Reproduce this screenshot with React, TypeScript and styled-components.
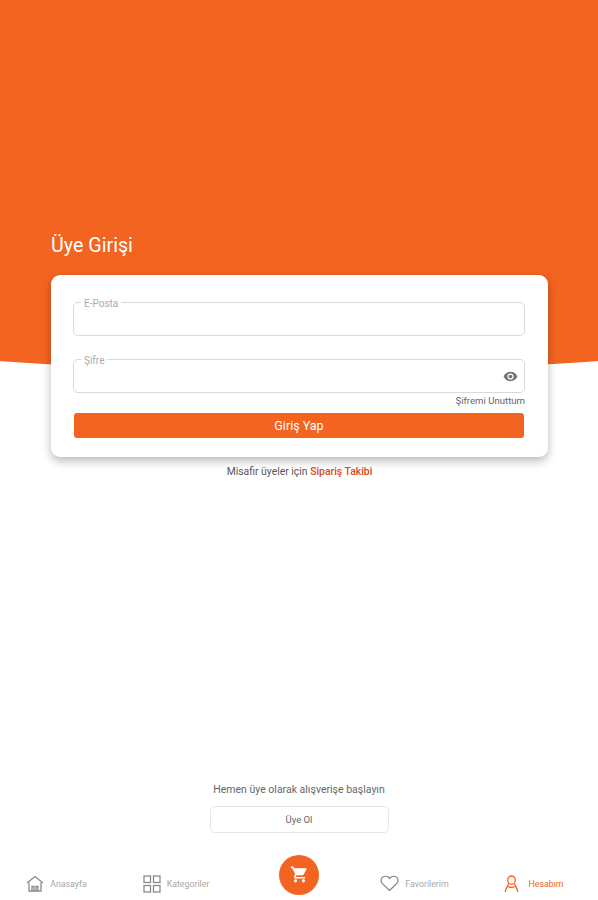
import * as React from 'react'
import styled, { createGlobalStyle } from 'styled-components';
import { MdShoppingCart, MdVisibility } from 'react-icons/md';

const ORANGE = '#f36421';

const GlobalStyle = createGlobalStyle`
    html, body {
        margin: 0;
        padding: 0;
        background: #fff;
        font-family: Roboto, "Liberation Sans", sans-serif;
    }
`
const Page = styled.div`
    position: relative;
    width: 598px;
    height: 900px;
    overflow: hidden;
    display: flex;
    flex-direction: column;
    background: #fff;
`
const HeroShape = styled.div`
    position: absolute;
    left: -121px;
    right: -121px;
    top: -700px;
    height: 1070px;
    border-radius: 0 0 50% 50% / 0 0 30px 30px;
    background: ${ORANGE};
`
const Main = styled.main`
    position: relative;
    flex: 1;
    display: flex;
    flex-direction: column;
    padding: 234px 50px 0 51px;
`
const Title = styled.h1`
    margin: 0 0 17px;
    font-size: 19.7px;
    line-height: 24px;
    font-weight: 400;
    color: #fff;
`
const Card = styled.form`
    display: flex;
    flex-direction: column;
    height: 182px;
    box-sizing: border-box;
    padding: 22px 23px 0 22px;
    border-radius: 9px;
    background: #fff;
    box-shadow: 0 4px 10px rgba(0, 0, 0, 0.28);
`
const Field = styled.fieldset`
    position: relative;
    height: 39px;
    box-sizing: border-box;
    margin: 0 0 18px;
    padding: 0 0 0 7px;
    border: 1.5px solid #d9d9d9;
    border-radius: 5px;
    &:last-of-type {
        margin-bottom: 0;
    }
`
const Legend = styled.legend`
    padding: 0 3px;
    font-size: 10px;
    line-height: 11px;
    color: #ababab;
    transform: translateY(1px);
`
const EyeIcon = styled(MdVisibility)`
    position: absolute;
    right: 6px;
    top: 4px;
    width: 15px;
    height: 15px;
    color: #757575;
`
const ForgotLink = styled.a`
    align-self: flex-end;
    margin-top: 2px;
    font-size: 9.6px;
    line-height: 12px;
    color: #666;
`
const SubmitButton = styled.button`
    height: 25px;
    margin: 6px 1px 0 1px;
    border: 0;
    border-radius: 3px;
    background: ${ORANGE};
    color: #fff;
    font-family: inherit;
    font-size: 12.5px;
`
const GuestLine = styled.p`
    margin: 9px 0 0;
    text-align: center;
    font-size: 10.4px;
    line-height: 12px;
    color: #555;
`
const GuestLink = styled.a`
    font-weight: 500;
    color: #d8481a;
`
const SignUp = styled.section`
    display: flex;
    flex-direction: column;
    align-items: center;
    gap: 10px;
    padding-bottom: 18px;
`
const SignUpText = styled.p`
    margin: 0;
    font-size: 10.5px;
    line-height: 13px;
    color: #666;
`
const SignUpButton = styled.button`
    width: 179px;
    height: 27px;
    box-sizing: border-box;
    background: #fff;
    border: 1px solid #e6e6e6;
    border-radius: 5px;
    font-family: inherit;
    font-size: 9.5px;
    color: #666;
`
const Nav = styled.nav`
    position: relative;
    display: grid;
    grid-template-columns: 113px 126px 120px 111px 128px;
    align-items: center;
    height: 49px;
    box-sizing: border-box;
    padding-top: 16px;
`
const NavItem = styled.a<{ $active?: boolean }>`
    display: flex;
    align-items: center;
    justify-content: center;
    gap: ${p => (p.$active ? 9 : 6)}px;
    height: 33px;
    font-size: 8.8px;
    color: ${p => (p.$active ? ORANGE : '#a8a8a8')};
    svg {
        display: block;
        fill: none;
        stroke: ${p => (p.$active ? ORANGE : '#8a8a8a')};
        stroke-width: 1.3;
    }
`
const CartCell = styled.div`
    display: flex;
    justify-content: center;
`
const CartButton = styled.button`
    width: 40px;
    height: 40px;
    margin-top: -18px;
    padding: 0;
    display: flex;
    align-items: center;
    justify-content: center;
    border: 0;
    border-radius: 50%;
    background: ${ORANGE};
    color: #fff;
    font-size: 19px;
`

const HomeIcon = () => (
    <svg width="18" height="17" viewBox="0 0 18 17">
        <path d="M1 8 9 1.5 17 8" />
        <path d="M3 7.5V16H15V7.5" />
        <path d="M6 16V11.5H8V16M10 16V11.5H12V16" />
    </svg>
);

const GridIcon = () => (
    <svg width="18" height="18" viewBox="0 0 18 18">
        <rect x="1" y="1" width="6.5" height="6.5" />
        <rect x="10.5" y="1" width="6.5" height="6.5" />
        <rect x="1" y="10.5" width="6.5" height="6.5" />
        <rect x="10.5" y="10.5" width="6.5" height="6.5" />
    </svg>
);

const HeartIcon = () => (
    <svg width="19" height="17" viewBox="0 0 19 17">
        <path d="M9.5 15.5 2.2 8.4C0.4 6.5 0.7 3.4 2.8 2 4.9 0.7 7.8 1.2 9.5 3.4 11.2 1.2 14.1 0.7 16.2 2 18.3 3.4 18.6 6.5 16.8 8.4Z" />
    </svg>
);

const UserIcon = () => (
    <svg width="15" height="18" viewBox="0 0 15 18">
        <ellipse cx="7.5" cy="5.2" rx="3.8" ry="4.2" />
        <path d="M4.6 8.6C4 11 2 12 1.2 17" />
        <path d="M10.4 8.6C11 11 13 12 13.8 17" />
        <path d="M4.2 11.5C6 12.5 9 12.5 10.8 11.5" />
    </svg>
);

export default function App() {
    return (
        <Page>
            <GlobalStyle />
            <HeroShape />
            <Main>
                <Title>Üye Girişi</Title>
                <Card>
                    <Field>
                        <Legend>E-Posta</Legend>
                    </Field>
                    <Field>
                        <Legend>Şifre</Legend>
                        <EyeIcon />
                    </Field>
                    <ForgotLink>Şifremi Unuttum</ForgotLink>
                    <SubmitButton type="button">Giriş Yap</SubmitButton>
                </Card>
                <GuestLine>
                    Misafir üyeler için <GuestLink>Sipariş Takibi</GuestLink>
                </GuestLine>
            </Main>
            <SignUp>
                <SignUpText>Hemen üye olarak alışverişe başlayın</SignUpText>
                <SignUpButton type="button">Üye Ol</SignUpButton>
            </SignUp>
            <Nav>
                <NavItem><HomeIcon />Anasayfa</NavItem>
                <NavItem><GridIcon />Kategoriler</NavItem>
                <CartCell>
                    <CartButton type="button"><MdShoppingCart /></CartButton>
                </CartCell>
                <NavItem><HeartIcon />Favorilerim</NavItem>
                <NavItem $active><UserIcon />Hesabım</NavItem>
            </Nav>
        </Page>
    );
}
